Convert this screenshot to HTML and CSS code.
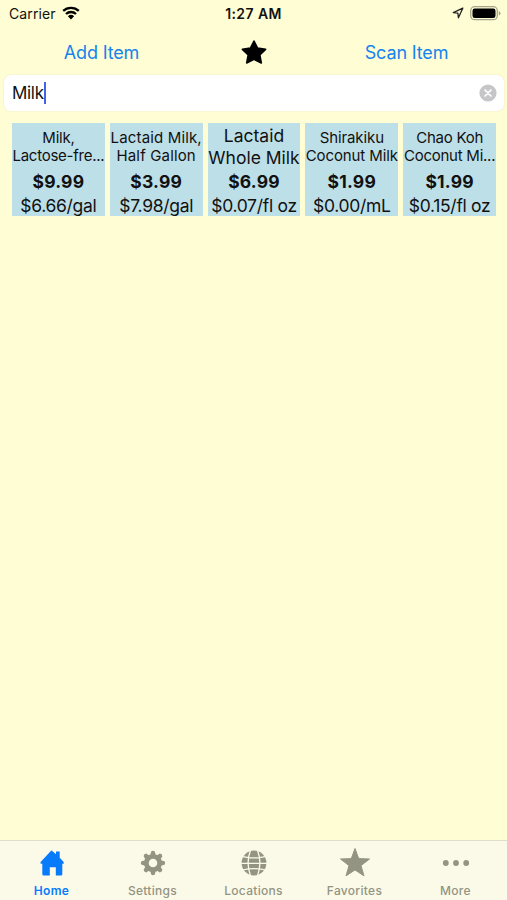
FILE: index.html
```html
<!DOCTYPE html>
<html lang="en">

<head>
    <meta charset="UTF-8">
    <meta name="viewport" content="width=device-width, initial-scale=1.0">
    <title>Home</title>
    <link rel="stylesheet" href="styles.css">
</head>

<body>
    <div class="app">
        <header class="status-bar">
            <div class="status-left">
                <span class="carrier">Carrier</span>
                <svg class="wifi" width="18" height="14" viewBox="0 0 18 14">
                    <path d="M1.2 4.9a11.3 11.3 0 0 1 15.6 0M4 8a7.2 7.2 0 0 1 10 0" fill="none" stroke="#000" stroke-width="2.3" />
                    <path d="M9 13.4L5.9 10.3a4.5 4.5 0 0 1 6.2 0z" />
                </svg>
            </div>
            <span class="time">1:27 AM</span>
            <div class="status-right">
                <svg width="12" height="12" viewBox="0 0 12 12">
                    <path d="M10.8 1.2L1.3 5.6l4.6.6.5 4.6z" fill="none" stroke="#222" stroke-width="1.3" stroke-linejoin="round" />
                </svg>
                <svg width="31" height="15" viewBox="0 0 31 15">
                    <rect x=".7" y=".7" width="26.6" height="13" rx="4" fill="none" stroke="#a5a58b" stroke-width="1.3" />
                    <rect x="2.5" y="2.5" width="23" height="9.4" rx="2.2" />
                    <path d="M28.8 5q1.7.7 1.7 2.3t-1.7 2.3z" fill="#a5a58b" />
                </svg>
            </div>
        </header>

        <nav class="actions">
            <button class="action-btn add-btn">Add Item</button>
            <button class="action-btn star-btn" aria-label="Favorite">
                <svg width="28" height="26" viewBox="0 0 28 26">
                    <path d="M14 2l3.6 7.1 8 1.3-5.8 5.6 1.5 8L14 20.3l-7.3 3.7 1.5-8-5.8-5.6 8-1.3z" stroke="#000" stroke-width="1.6" stroke-linejoin="round" />
                </svg>
            </button>
            <button class="action-btn scan-btn">Scan Item</button>
        </nav>

        <div class="search">
            <span class="search-text">Milk</span>
            <span class="caret"></span>
            <svg class="clear" width="18" height="18" viewBox="0 0 18 18">
                <circle cx="9" cy="9" r="8.6" fill="#c6c6c8" />
                <path d="M6 6l6 6M12 6l-6 6" stroke="#fff" stroke-width="1.7" stroke-linecap="round" />
            </svg>
        </div>

        <main class="items">
            <div class="item">
                <div class="name tight">Milk,<br>Lactose-fre...</div>
                <div class="price">$9.99</div>
                <div class="unit">$6.66/gal</div>
            </div>
            <div class="item">
                <div class="name wide">Lactaid Milk,<br>Half Gallon</div>
                <div class="price">$3.99</div>
                <div class="unit">$7.98/gal</div>
            </div>
            <div class="item">
                <div class="name large">Lactaid<br>Whole Milk</div>
                <div class="price">$6.99</div>
                <div class="unit">$0.07/fl oz</div>
            </div>
            <div class="item">
                <div class="name">Shirakiku<br>Coconut Milk</div>
                <div class="price">$1.99</div>
                <div class="unit">$0.00/mL</div>
            </div>
            <div class="item">
                <div class="name tight">Chao Koh<br>Coconut Mi...</div>
                <div class="price">$1.99</div>
                <div class="unit">$0.15/fl oz</div>
            </div>
        </main>

        <footer class="tab-bar">
            <a class="tab active">
                <svg width="32" height="32" viewBox="0 0 32 32">
                    <path d="M16 3.7L20 7.3V4.6h3.7v6.1l4 4.3v1.8h-1.4v10.4q0 1.3-1.3 1.3h-5.2v-8.2h-6v8.2H7.6q-1.3 0-1.3-1.3V16.8H4.6V15L14.6 4.2q.8-.8 1.4-.5z" />
                </svg>
                <span>Home</span>
            </a>
            <a class="tab">
                <svg width="32" height="32" viewBox="0 0 32 32">
                    <circle cx="16" cy="16" r="6.7" fill="none" stroke="currentColor" stroke-width="4.8" />
                    <g id="teeth">
                        <path id="tooth" d="M13.2 8.5l1-4q1.8-1.5 3.6 0l1 4zM13.2 23.5l1 4q1.8 1.5 3.6 0l1-4z" />
                        <use href="#tooth" transform="rotate(90 16 16)" />
                    </g>
                    <use href="#teeth" transform="rotate(45 16 16)" />
                </svg>
                <span>Settings</span>
            </a>
            <a class="tab">
                <svg width="32" height="32" viewBox="0 0 32 32">
                    <circle cx="16" cy="16" r="12.4" />
                    <path class="grid-lines" d="M3 16.3h26M5 9.6q11 2.6 22 0M5 22.9q11-2.6 22 0M12.4 3.5Q7.8 16 12.4 28.5M19.6 3.5Q24.2 16 19.6 28.5" />
                </svg>
                <span>Locations</span>
            </a>
            <a class="tab">
                <svg width="32" height="32" viewBox="0 0 32 32">
                    <path d="M16 1.5l3.7 10.1 10.8.4-8.5 6.6 3 10.3-9-6-9 6 3-10.3L1.5 12l10.8-.4z" stroke="currentColor" stroke-width="1" stroke-linejoin="round" />
                </svg>
                <span>Favorites</span>
            </a>
            <a class="tab">
                <svg width="32" height="32" viewBox="0 0 32 32">
                    <circle cx="5.8" cy="16" r="2.9" />
                    <circle cx="16" cy="16" r="2.9" />
                    <circle cx="26.2" cy="16" r="2.9" />
                </svg>
                <span>More</span>
            </a>
        </footer>
    </div>
</body>

</html>
```
FILE: styles.css
```css
* {
    box-sizing: border-box;
}

body {
    margin: 0;
    font-family: Inter, "Liberation Sans", sans-serif;
    color: #111;
}

.app {
    display: flex;
    flex-direction: column;
    height: 900px;
    width: 507px;
    overflow: hidden;
    background-color: #fffdd3;
}

.status-bar {
    display: grid;
    grid-template-columns: 1fr auto 1fr;
    align-items: center;
    height: 26px;
    padding: 0 6px 0 9px;
    font-size: 14px;
}

.status-left,
.status-right {
    display: flex;
    align-items: center;
    gap: 6px;
}

.status-right {
    justify-content: flex-end;
}

.carrier {
    letter-spacing: 0.1px;
}

.time {
    margin-right: 3px;
    font-weight: 600;
    letter-spacing: 0.4px;
}

.actions {
    display: grid;
    grid-template-columns: 202px 103px 202px;
    height: 49px;
    padding-top: 2px;
}

.action-btn {
    display: flex;
    align-items: center;
    justify-content: center;
    border: none;
    padding: 1px 0 0 1px;
    background: none;
    color: #1583ee;
    font-family: inherit;
    font-size: 18px;
    letter-spacing: -0.15px;
    cursor: pointer;
}

.search {
    display: flex;
    align-items: center;
    height: 36px;
    margin: 0 3px 0 4px;
    padding: 0 7px 0 8px;
    border-radius: 7px;
    background-color: #fff;
    box-shadow: 0 0 2px #e8e6cc;
    font-size: 17px;
}

.search-text {
    letter-spacing: -0.3px;
}

.caret {
    width: 2px;
    height: 22px;
    background-color: #4263e6;
}

.clear {
    margin-left: auto;
}

.items {
    display: grid;
    grid-template-columns: repeat(5, minmax(0, 1fr));
    gap: 5px;
    margin: 12px 11px 0 12px;
}

.item {
    height: 93px;
    padding-top: 3px;
    background-color: #bddfe8;
    text-align: center;
    white-space: nowrap;
}

.name {
    display: flex;
    flex-direction: column;
    align-items: center;
    justify-content: center;
    height: 41px;
    font-size: 15px;
    line-height: 18px;
    letter-spacing: -0.1px;
}

.tight {
    letter-spacing: -0.25px;
}

.wide {
    letter-spacing: 0.15px;
}

.large {
    font-size: 17.5px;
    line-height: 22px;
    letter-spacing: 0;
}

.price {
    height: 30px;
    font-size: 17.5px;
    font-weight: 700;
    line-height: 29px;
    letter-spacing: 0.2px;
}

.unit {
    font-size: 17.5px;
    line-height: 17px;
    letter-spacing: -0.3px;
}

.tab-bar {
    display: grid;
    grid-template-columns: repeat(5, 101px);
    justify-content: center;
    height: 60px;
    margin-top: auto;
    border-top: 1px solid #deddcf;
    background-color: #fbfae9;
}

.tab {
    display: flex;
    flex-direction: column;
    align-items: center;
    padding-top: 6px;
    color: #939481;
    font-size: 12px;
    font-weight: 500;
    line-height: 15px;
    letter-spacing: 0.3px;
}

.tab svg {
    margin-bottom: 4px;
    fill: currentColor;
}

.tab.active {
    color: #087bfd;
    font-weight: 600;
}

.grid-lines {
    fill: none;
    stroke: #fbfae9;
    stroke-width: 1.3;
}
```
